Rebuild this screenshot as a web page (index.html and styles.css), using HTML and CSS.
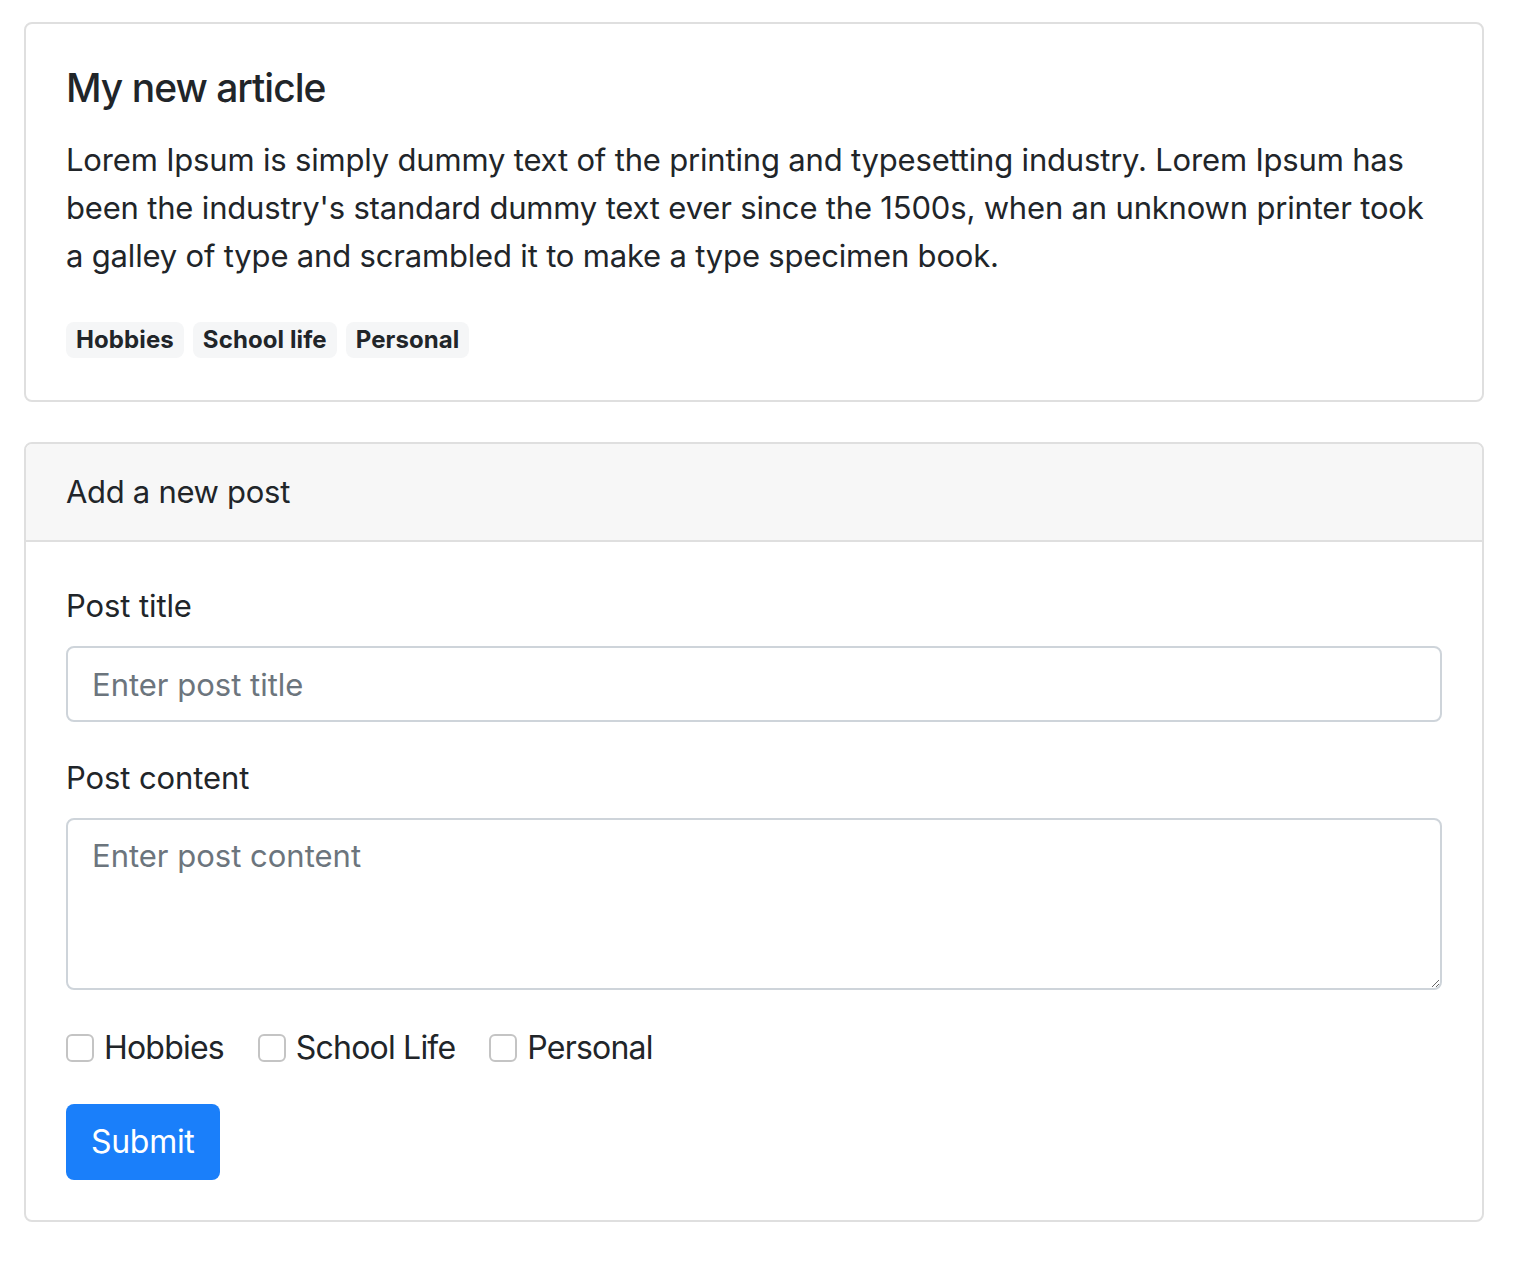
FILE: index.html
```html
<!DOCTYPE html>
<html lang="en">
<head>
<meta charset="utf-8">
<title>My new article</title>
<link rel="stylesheet" href="styles.css">
</head>
<body>
<div class="page">
  <div class="card">
    <div class="card-body">
      <h5 class="card-title">My new article</h5>
      <p class="card-text">Lorem Ipsum is simply dummy text of the printing and typesetting industry. Lorem Ipsum has been the industry's standard dummy text ever since the 1500s, when an unknown printer took a galley of type and scrambled it to make a type specimen book.</p>
      <div class="tags">
        <span class="badge">Hobbies</span>
        <span class="badge">School life</span>
        <span class="badge">Personal</span>
      </div>
    </div>
  </div>

  <div class="card card-form">
    <div class="card-header">Add a new post</div>
    <div class="card-body">
      <div class="form-group">
        <label class="label" for="title">Post title</label>
        <input class="form-control" id="title" type="text" placeholder="Enter post title">
      </div>
      <div class="form-group">
        <label class="label" for="content">Post content</label>
        <textarea class="form-control textarea" id="content" rows="3" placeholder="Enter post content"></textarea>
      </div>
      <div class="checks">
        <label class="check"><input type="checkbox" class="check-input"><span>Hobbies</span></label>
        <label class="check"><input type="checkbox" class="check-input"><span>School Life</span></label>
        <label class="check"><input type="checkbox" class="check-input"><span>Personal</span></label>
      </div>
      <button class="btn" type="button">Submit</button>
    </div>
  </div>
</div>
</body>
</html>
```
FILE: styles.css
```css
* { box-sizing: border-box; }
html, body { margin: 0; padding: 0; background: #fff; }
body {
  font-family: Inter, "Noto Sans", "Liberation Sans", sans-serif;
  font-size: 32px;
  line-height: 48px;
  color: #212529;
}
.page {
  padding: 22px 32px 48px 24px;
}
.card {
  border: 2px solid #dfdfdf;
  border-radius: 8px;
  background: #fff;
  overflow: hidden;
}
.card-form { margin-top: 40px; }
.card-body { padding: 40px; }
.card-title {
  margin: 0 0 24px;
  font-size: 39px;
  line-height: 48px;
  font-weight: 500;
  letter-spacing: -1px;
}
.card-text {
  margin: 0 0 32px;
  font-size: 31px;
  letter-spacing: -0.18px;
}
.tags {
  display: flex;
  gap: 9px;
  align-items: center;
  height: 48px;
  padding-top: 8px;
}
.badge {
  display: inline-block;
  background: #f5f6f7;
  border-radius: 8px;
  font-size: 24px;
  font-weight: 700;
  line-height: 24px;
  padding: 6px 10px;
  letter-spacing: 0.1px;
  color: #212529;
}
.card-header {
  background: #f7f7f7;
  border-bottom: 2px solid #dfdfdf;
  padding: 24px 40px;
  font-size: 31px;
  letter-spacing: -0.3px;
}
.form-group { margin-bottom: 32px; }
.label {
  display: block;
  margin-bottom: 16px;
  font-size: 31px;
  letter-spacing: -0.1px;
}
.form-control {
  display: block;
  width: 100%;
  height: 76px;
  padding: 12px 24px;
  font-family: inherit;
  font-size: 31px;
  line-height: 48px;
  color: #495057;
  border: 2px solid #ced4da;
  border-radius: 8px;
  background: #fff;
  outline: none;
  letter-spacing: 0;
}
.form-control::placeholder { color: #6c757d; opacity: 1; }
.textarea {
  height: 172px;
  resize: vertical;
}
.checks {
  display: flex;
  align-items: center;
  height: 50px;
  padding-top: 2px;
  margin-bottom: 32px;
}
.check {
  display: inline-flex;
  align-items: center;
  margin-right: 34px;
  font-size: 32px;
  letter-spacing: -0.8px;
}
.check-input {
  appearance: none;
  -webkit-appearance: none;
  width: 28px;
  height: 28px;
  margin: 0 10px 0 0;
  border: 2px solid #c4c4c4;
  border-radius: 6px;
  background: #fff;
}
.btn {
  display: inline-block;
  background: #1a7ffa;
  color: #fff;
  border: 0;
  border-radius: 8px;
  padding: 14px 25px;
  height: 76px;
  font-family: inherit;
  font-size: 32px;
  line-height: 48px;
  letter-spacing: -0.3px;
}
```
